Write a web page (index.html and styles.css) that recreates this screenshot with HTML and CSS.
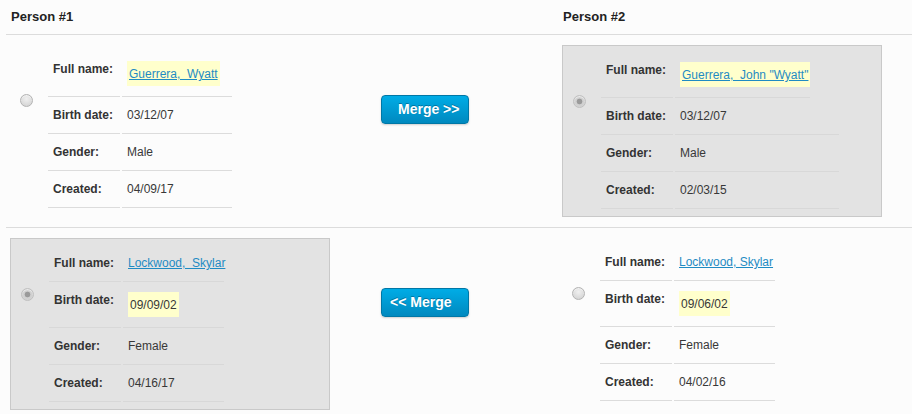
FILE: index.html
```html
<!DOCTYPE html>
<html lang="en">
<head>
<meta charset="utf-8">
<title>Merge records</title>
<link rel="stylesheet" href="styles.css">
</head>
<body>
<div class="merge">
  <div class="merge__head">
    <div class="col col--left"><h2 class="merge__title">Person #1</h2></div>
    <div class="col col--mid"></div>
    <div class="col col--right"><h2 class="merge__title">Person #2</h2></div>
  </div>

  <div class="merge__row">
    <div class="col col--left">
      <div class="panel">
        <span class="radio"></span>
        <div class="record record--w110">
          <div class="record__label">Full name:</div>
          <div class="record__value"><a href="#" class="hl link">Guerrera,&nbsp; Wyatt</a></div>
          <div class="record__label">Birth date:</div>
          <div class="record__value">03/12/07</div>
          <div class="record__label">Gender:</div>
          <div class="record__value">Male</div>
          <div class="record__label">Created:</div>
          <div class="record__value">04/09/17</div>
        </div>
      </div>
    </div>
    <div class="col col--mid">
      <button class="btn btn--forward" type="button">Merge &gt;&gt;</button>
    </div>
    <div class="col col--right">
      <div class="panel panel--selected">
        <span class="radio radio--checked"></span>
        <div class="record record--w164">
          <div class="record__label">Full name:</div>
          <div class="record__value record__value--short"><a href="#" class="hl link">Guerrera,&nbsp; John "Wyatt"</a></div>
          <div class="record__label">Birth date:</div>
          <div class="record__value">03/12/07</div>
          <div class="record__label">Gender:</div>
          <div class="record__value">Male</div>
          <div class="record__label">Created:</div>
          <div class="record__value">02/03/15</div>
        </div>
      </div>
    </div>
  </div>

  <div class="merge__row">
    <div class="col col--left">
      <div class="panel panel--selected">
        <span class="radio radio--checked"></span>
        <div class="record record--w101">
          <div class="record__label">Full name:</div>
          <div class="record__value"><a href="#" class="link">Lockwood,&nbsp; Skylar</a></div>
          <div class="record__label">Birth date:</div>
          <div class="record__value"><span class="hl">09/09/02</span></div>
          <div class="record__label">Gender:</div>
          <div class="record__value">Female</div>
          <div class="record__label">Created:</div>
          <div class="record__value">04/16/17</div>
        </div>
      </div>
    </div>
    <div class="col col--mid">
      <button class="btn btn--back" type="button">&lt;&lt; Merge</button>
    </div>
    <div class="col col--right">
      <div class="panel">
        <span class="radio"></span>
        <div class="record record--w101">
          <div class="record__label">Full name:</div>
          <div class="record__value"><a href="#" class="link">Lockwood, Skylar</a></div>
          <div class="record__label">Birth date:</div>
          <div class="record__value"><span class="hl">09/06/02</span></div>
          <div class="record__label">Gender:</div>
          <div class="record__value">Female</div>
          <div class="record__label">Created:</div>
          <div class="record__value">04/02/16</div>
        </div>
      </div>
    </div>
  </div>
</div>
</body>
</html>
```

FILE: styles.css
```css
* {
  box-sizing: border-box;
}

html, body {
  margin: 0;
  padding: 0;
  background: #fcfcfc;
}

body {
  font-family: "Liberation Sans", Arial, sans-serif;
  font-size: 12px;
  color: #333;
}

.merge {
  margin-left: 6px;
}

.merge__head,
.merge__row {
  display: grid;
  grid-template-columns: 329px 223px 1fr;
  border-bottom: 1px solid #dcdcdc;
}

.merge__row {
  padding: 10px 0;
  align-items: start;
}

.merge__title {
  margin: 0;
  padding: 9px 0 10px 1px;
  font-size: 13px;
  line-height: 15px;
  font-weight: bold;
  color: #222;
}

.col--left,
.col--right {
  padding-left: 4px;
}

/* panel */
.panel {
  width: 320px;
  display: flex;
  align-items: flex-start;
  padding: 6px 0 7px 10px;
}

.panel--selected {
  background: #e3e3e3;
  border: 1px solid #c9c9c9;
}

.radio {
  flex: none;
  width: 13px;
  height: 13px;
  margin: 43px 15px 0 0;
  border-radius: 50%;
  border: 1px solid #b3b3b3;
  background: radial-gradient(circle at 50% 35%, #f0f0f0 0%, #dcdcdc 60%, #cfcfcf 100%);
  box-shadow: inset 0 1px 1px rgba(255, 255, 255, 0.6);
}

.radio--checked {
  border-color: #c0c0c0;
  background: radial-gradient(circle at 50% 50%, #9a9a9a 0, #9a9a9a 2.5px, #cfcfcf 3.2px, #d6d6d6 100%);
}

/* record table */
.record {
  display: grid;
  column-gap: 2px;
}

.record--w110 { grid-template-columns: 72px 110px; }
.record--w164 { grid-template-columns: 72px 164px; }
.record--w101 { grid-template-columns: 72px 101px; }

.record__label,
.record__value {
  padding: 10px 0 10px 5px;
  line-height: 16px;
  border-bottom: 1px solid #dcdcdc;
  white-space: nowrap;
}

.panel--selected .record__label,
.panel--selected .record__value {
  border-bottom-color: #d8d8d8;
}

.record__label {
  font-weight: bold;
  color: #333;
}

.record__value {
  color: #383838;
}

.record__value--short {
  width: 135px;
}

.hl {
  display: block;
  width: fit-content;
  background: #ffffcc;
  padding: 5px 2px 4px;
  line-height: 16px;
}

.link {
  color: #1f8bc3;
  text-decoration: underline;
}

/* buttons */
.btn {
  display: block;
  width: 88px;
  height: 29px;
  margin: 50px 0 0 46px;
  padding: 0;
  border: 1px solid #0077a6;
  border-radius: 4px;
  background: linear-gradient(#00ace6, #0089bf);
  box-shadow: 0 1px 2px rgba(0, 0, 0, 0.18);
  color: #fff;
  font-family: "Liberation Sans", Arial, sans-serif;
  font-size: 14px;
  font-weight: bold;
  line-height: 27px;
  text-align: left;
  text-shadow: 0 -1px 0 rgba(0, 60, 90, 0.45);
  cursor: pointer;
}

.btn--forward {
  padding-left: 16px;
}

.btn--back {
  padding-left: 8px;
}
```
